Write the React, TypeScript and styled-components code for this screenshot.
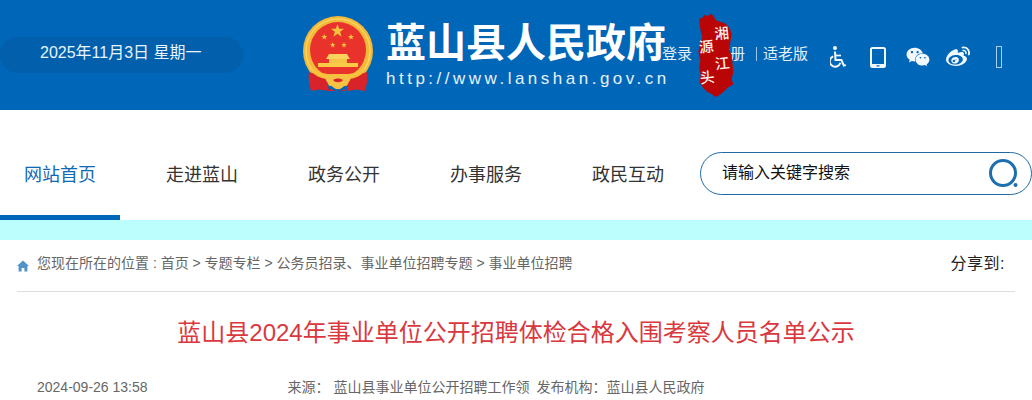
import styled, { createGlobalStyle } from "styled-components";
import { FaWeibo, FaWeixin } from "react-icons/fa";

const GlobalStyle = createGlobalStyle`
  html, body {
    margin: 0;
    padding: 0;
    background: #ffffff;
    overflow: hidden;
  }
  body {
    font-family: "Liberation Sans", "Noto Sans CJK SC", sans-serif;
  }
`;

const Header = styled.header`
  position: relative;
  display: flex;
  align-items: flex-start;
  height: 110px;
  background-color: #0066b8;
  color: #ffffff;
`;

const DatePill = styled.div`
  width: 243px;
  height: 36px;
  margin-top: 37px;
  margin-right: 60px;
  padding-left: 40px;
  box-sizing: border-box;
  border-radius: 18px;
  background-color: #015fac;
  font-size: 16px;
  line-height: 32px;
  color: #e8f4ff;
`;

const Emblem = styled.svg`
  width: 70px;
  height: 76px;
  margin-top: 16px;
  margin-right: 13px;
  flex: none;
`;

const Brand = styled.div`
  width: 276px;
  flex: none;
  white-space: nowrap;
`;

const BrandName = styled.div`
  margin-top: 21px;
  font-size: 40px;
  line-height: 44px;
  font-weight: 700;
  color: #ffffff;
`;

const BrandUrl = styled.div`
  margin-top: 4px;
  font-size: 17px;
  line-height: 20px;
  letter-spacing: 3.5px;
  color: #e6f2fb;
`;

const TopLinks = styled.div`
  display: flex;
  align-items: center;
  margin-top: 42px;
  height: 20px;
  font-size: 15px;
  color: #e3f0fb;
  white-space: nowrap;
`;

const TopLink = styled.span<{ $gap?: number }>`
  margin-left: ${({ $gap }) => $gap ?? 0}px;
`;

const Divider = styled.span<{ $gap: number }>`
  width: 1px;
  height: 14px;
  margin-top: 4px;
  margin-left: ${({ $gap }) => $gap}px;
  background-color: #9cc6e8;
`;

const IconRow = styled.div`
  display: flex;
  align-items: center;
  height: 22px;
  margin-top: 46px;
  margin-left: 22px;
  color: #f2f8fd;
`;

const IconCell = styled.span<{ $width: number; $gap: number }>`
  display: flex;
  align-items: center;
  justify-content: center;
  width: ${({ $width }) => $width}px;
  margin-right: ${({ $gap }) => $gap}px;
`;

const MissingGlyph = styled.span`
  width: 4px;
  height: 20px;
  border: 1px solid #a9cdea;
`;

const MapBadge = styled.svg`
  position: absolute;
  left: 685px;
  top: 5px;
  width: 60px;
  height: 100px;
`;

const MapText = styled.text`
  font-family: "Noto Sans CJK SC", sans-serif;
  font-size: 44px;
  font-weight: 500;
  fill: #fdf1ec;
  text-anchor: middle;
`;

const Nav = styled.nav`
  display: flex;
  align-items: flex-start;
  height: 110px;
`;

const NavItem = styled.a<{ $active?: boolean }>`
  box-sizing: border-box;
  width: ${({ $active }) => ($active ? 120 : 72)}px;
  height: 110px;
  margin-right: ${({ $active }) => ($active ? 46 : 70)}px;
  padding-left: ${({ $active }) => ($active ? 24 : 0)}px;
  font-size: 18px;
  line-height: 130px;
  white-space: nowrap;
  color: ${({ $active }) => ($active ? "#0f69b2" : "#333333")};
  border-bottom: 5px solid ${({ $active }) => ($active ? "#0066b8" : "transparent")};
`;

const SearchBox = styled.div`
  position: absolute;
  left: 700px;
  top: 152px;
  display: flex;
  align-items: center;
  box-sizing: border-box;
  width: 332px;
  height: 43px;
  padding: 0 10px 0 21px;
  border: 1px solid #1f6aa5;
  border-radius: 22px;
  background: #ffffff;
`;

const SearchInput = styled.input`
  flex: 1;
  min-width: 0;
  height: 38px;
  margin-bottom: 2px;
  border: 0;
  outline: 0;
  padding: 0;
  background: transparent;
  font-family: inherit;
  font-size: 16px;
  color: #111111;

  &::placeholder {
    color: #111111;
    opacity: 1;
  }
`;

const Band = styled.div`
  height: 20px;
  background-color: #bcfdfd;
`;

const Main = styled.main`
  padding: 0 17px;
`;

const CrumbBar = styled.div`
  display: flex;
  align-items: center;
  box-sizing: border-box;
  height: 52px;
  padding-bottom: 7px;
  border-bottom: 1px solid #dddddd;
  font-size: 14px;
  color: #666666;
  white-space: nowrap;
`;

const HomeIcon = styled.svg`
  width: 12px;
  height: 12px;
  margin-top: 7px;
  margin-right: 8px;
  flex: none;
`;

const Share = styled.span`
  margin-left: auto;
  margin-right: 10px;
  font-size: 16px;
  letter-spacing: 0.5px;
  color: #222222;
`;

const ArticleTitle = styled.h1`
  margin: 25px 0 0;
  font-size: 24px;
  line-height: 32px;
  font-weight: 400;
  text-align: center;
  color: #d9383e;
  white-space: nowrap;
`;

const MetaRow = styled.div`
  display: flex;
  margin-top: 29px;
  padding-left: 20px;
  font-size: 14px;
  line-height: 18px;
  color: #666666;
  white-space: nowrap;
`;

const MetaItem = styled.span<{ $left: number }>`
  margin-left: ${({ $left }) => $left}px;
`;

const Star = ({ x, y, r }: { x: number; y: number; r: number }) => {
  const pts = Array.from({ length: 10 }, (_, i) => {
    const a = (Math.PI / 5) * i - Math.PI / 2;
    const d = i % 2 === 0 ? r : r * 0.4;
    return `${(x + d * Math.cos(a)).toFixed(2)},${(y + d * Math.sin(a)).toFixed(2)}`;
  }).join(" ");
  return <polygon points={pts} fill="#f4c33c" />;
};

const NationalEmblem = () => (
  <Emblem viewBox="0 0 70 76">
    <circle cx="35" cy="35" r="35" fill="#f2b93a" />
    <circle cx="35" cy="35" r="32" fill="none" stroke="#fbd45e" strokeWidth="1.4" />
    <circle cx="35" cy="34" r="28" fill="#e9322b" />
    <Star x={34.5} y={15} r={7} />
    <Star x={21.3} y={21} r={3.2} />
    <Star x={48} y={21} r={3.2} />
    <Star x={29.7} y={29} r={3} />
    <Star x={41} y={29} r={3} />
    <path d="M26 38 L44 38 L47 43 L23 43 Z" fill="#fbd25c" />
    <rect x="26" y="43" width="18" height="4.5" fill="#f6c447" />
    <path d="M15 47 H55 V51 H15 Z" fill="#fbcb45" />
    <path d="M6 56 L24 62 L26 75 L16 73.5 L8 75 C6 68 5 62 6 56 Z" fill="#d8232a" />
    <path d="M64 56 L46 62 L44 75 L54 73.5 L62 75 C64 68 65 62 64 56 Z" fill="#d8232a" />
    <path d="M9 51 C14 56 20 58 27 58 L43 58 C50 58 56 56 61 51 L59 58 C54 62 48 63 45 63 L25 63 C22 63 16 62 11 58 Z" fill="#f7c13b" />
    <path d="M23 61 C26 56 31 61 35 59 C39 61 44 56 47 61 C49 65 44 66 44 70 C40 69 39 74 35 73 C31 74 30 69 26 70 C26 66 21 65 23 61 Z" fill="#f6c243" />
    <path d="M30 64 C33 62 37 62 40 64 C38 67 32 67 30 64 Z" fill="#d8232a" />
    <path d="M27 73 L35 75.5 L43 73 L43 75 L27 75 Z" fill="#d8232a" />
  </Emblem>
);

const WheelchairIcon = () => (
  <svg width="16" height="22" viewBox="0 0 16 22" fill="none" stroke="currentColor">
    <circle cx="5" cy="2" r="2" fill="currentColor" stroke="none" />
    <path d="M5 5.5 L5.5 14 L11.5 14 L13.8 19.6 L15.8 19" strokeWidth="2" />
    <path d="M5.5 9.5 L11 9.5" strokeWidth="1.7" />
    <path d="M3.2 10.3 A5.4 5.4 0 1 0 10.4 16.8" strokeWidth="1.9" />
  </svg>
);

const TabletIcon = () => (
  <svg width="16" height="21" viewBox="0 0 16 21" fill="none">
    <path
      fillRule="evenodd"
      d="M2.5 0 H13.5 A2.5 2.5 0 0 1 16 2.5 V18.5 A2.5 2.5 0 0 1 13.5 21 H2.5 A2.5 2.5 0 0 1 0 18.5 V2.5 A2.5 2.5 0 0 1 2.5 0 Z M2 2 V17 H14 V2 Z M6.5 18.2 V19.6 H9.5 V18.2 Z"
      fill="currentColor"
    />
  </svg>
);

const SearchIcon = () => (
  <svg width="32" height="32" viewBox="0 0 32 32" fill="none">
    <circle cx="14" cy="15" r="12.5" stroke="#1d6fae" strokeWidth="3" />
    <circle cx="26.5" cy="27" r="2" fill="#1d6fae" />
  </svg>
);

const navItems = ["走进蓝山", "政务公开", "办事服务", "政民互动"];

export default function App() {
  return (
    <>
      <GlobalStyle />
      <Header>
        <DatePill>2025年11月3日 星期一</DatePill>
        <NationalEmblem />
        <Brand>
          <BrandName>蓝山县人民政府</BrandName>
          <BrandUrl>http://www.lanshan.gov.cn</BrandUrl>
        </Brand>
        <TopLinks>
          <TopLink>登录</TopLink>
          <TopLink $gap={23}>注册</TopLink>
          <Divider $gap={11} />
          <TopLink $gap={6}>适老版</TopLink>
        </TopLinks>
        <IconRow>
          <IconCell $width={16} $gap={24}><WheelchairIcon /></IconCell>
          <IconCell $width={16} $gap={20}><TabletIcon /></IconCell>
          <IconCell $width={24} $gap={16}><FaWeixin size={24} /></IconCell>
          <IconCell $width={24} $gap={26}><FaWeibo size={24} /></IconCell>
          <IconCell $width={6} $gap={0}><MissingGlyph /></IconCell>
        </IconRow>
        <MapBadge viewBox="0 0 180 300">
          <polygon
            points="42,42 52,38 58,30 68,33 78,26 86,34 92,46 106,50 122,56 134,70 140,88 136,110 133,134 139,150 142,172 145,200 140,222 145,238 128,248 114,262 100,272 90,276 80,266 68,262 54,248 44,232 47,208 42,190 46,166 40,140 46,116 52,96 46,72"
            fill="#b90505"
          />
          <MapText x="110" y="101" transform="rotate(-6 110 85)">湘</MapText>
          <MapText x="112" y="191" transform="rotate(-6 112 175)">江</MapText>
          <MapText x="64" y="141" transform="rotate(-6 64 125)">源</MapText>
          <MapText x="67" y="233" transform="rotate(-6 67 217)">头</MapText>
        </MapBadge>
      </Header>
      <Nav>
        <NavItem $active>网站首页</NavItem>
        {navItems.map((item) => (
          <NavItem key={item}>{item}</NavItem>
        ))}
      </Nav>
      <SearchBox>
        <SearchInput placeholder="请输入关键字搜索" />
        <SearchIcon />
      </SearchBox>
      <Band />
      <Main>
        <CrumbBar>
          <HomeIcon viewBox="0 0 12 12">
            <path d="M6 0.5 L12 6 L10.4 6 L10.4 11.5 L7.4 11.5 L7.4 8 L4.6 8 L4.6 11.5 L1.6 11.5 L1.6 6 L0 6 Z" fill="#4f93c7" />
          </HomeIcon>
          您现在所在的位置 : 首页 &gt; 专题专栏 &gt; 公务员招录、事业单位招聘专题 &gt; 事业单位招聘
          <Share>分享到:</Share>
        </CrumbBar>
        <ArticleTitle>蓝山县2024年事业单位公开招聘体检合格入围考察人员名单公示</ArticleTitle>
        <MetaRow>
          <span>2024-09-26 13:58</span>
          <MetaItem $left={140}>来源：</MetaItem>
          <MetaItem $left={4}>蓝山县事业单位公开招聘工作领</MetaItem>
          <MetaItem $left={7}>发布机构：</MetaItem>
          <span>蓝山县人民政府</span>
        </MetaRow>
      </Main>
    </>
  );
}
